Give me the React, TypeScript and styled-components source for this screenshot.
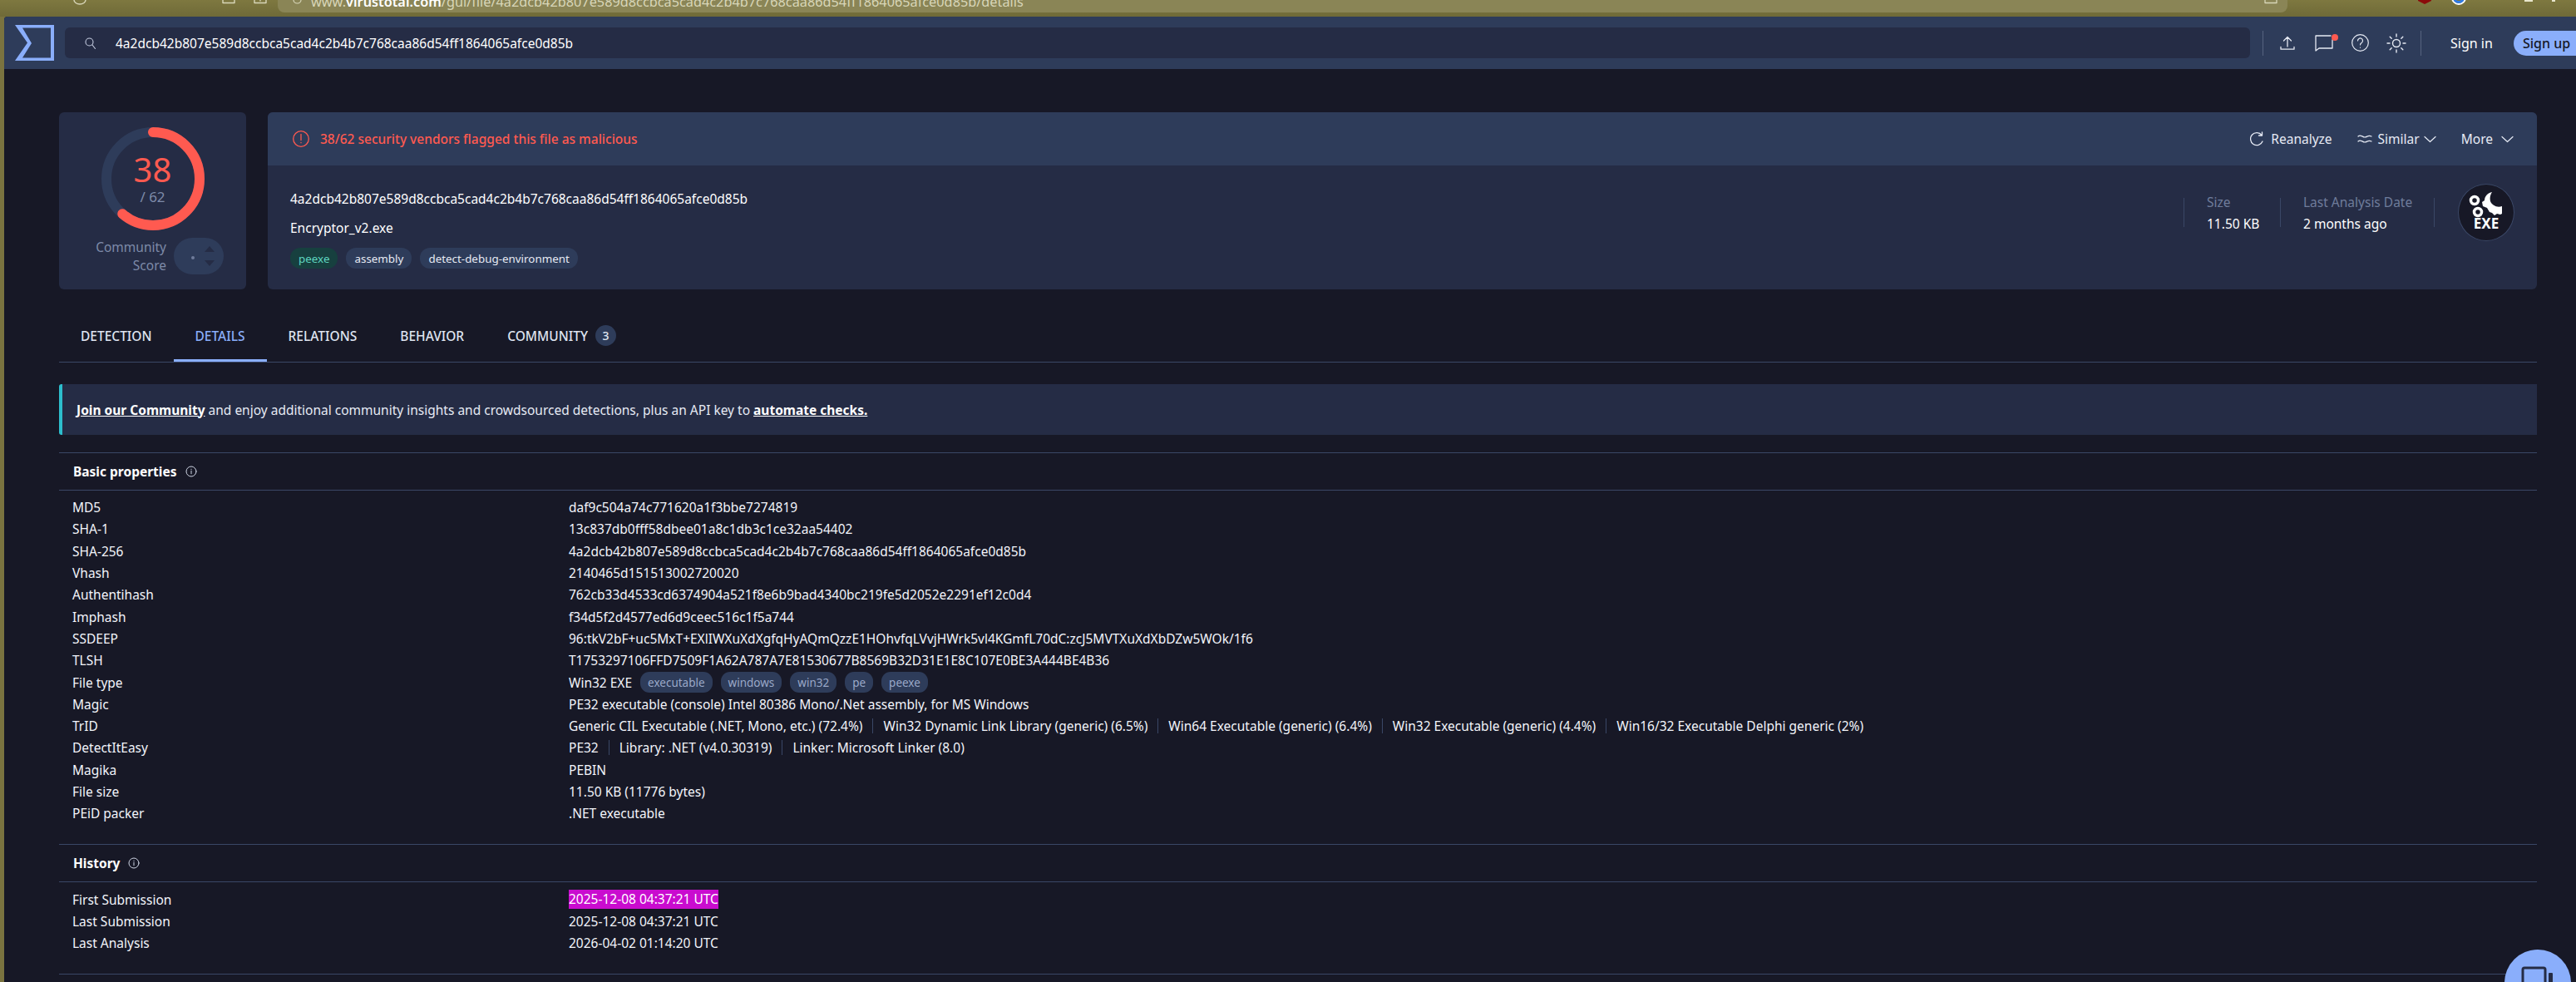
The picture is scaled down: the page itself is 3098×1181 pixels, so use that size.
import React from "react";
import styled, { createGlobalStyle } from "styled-components";

const GlobalStyle = createGlobalStyle`
  html, body {
    margin: 0;
    padding: 0;
    background: #7a7340;
    font-family: "Noto Sans", "Open Sans", sans-serif;
  }
`;

const Screen = styled.div`
  width: 3098px;
  height: 1181px;
  overflow: hidden;
  position: relative;
  background: #7a7340;
  color: #fff;
`;

const BrowserBar = styled.div`
  height: 20px;
  display: flex;
  align-items: flex-start;
  overflow: hidden;
  background: linear-gradient(#7e7840, #6f6a38);
`;

const ChromeIcon = styled.svg<{ $left: number }>`
  flex: none;
  margin-left: ${(p) => p.$left}px;
`;

const UrlBar = styled.div`
  margin-left: 13px;
  width: 2417px;
  height: 15px;
  flex: none;
  border-radius: 0 0 8px 8px;
  background: #8a8556;
  overflow: hidden;
  display: flex;
  align-items: flex-start;
  padding-left: 18px;
  box-sizing: border-box;
  position: relative;
  font-size: 16.3px;
  line-height: 22px;
  color: #d8d6b8;
  white-space: pre;
`;

const UrlHost = styled.span`
  color: #fff;
  font-weight: 600;
`;

const UrlText = styled.span`
  margin: -9px 0 0 11px;
`;

const UrlBookmark = styled.svg`
  position: absolute;
  right: 12px;
  top: 0;
`;

const Page = styled.div`
  margin-left: 5px;
  height: 1161px;
  background: #171826;
  border-radius: 4px 0 0 0;
  overflow: hidden;
`;

const TopBar = styled.header`
  height: 63px;
  background: #2e3c5a;
  display: flex;
  align-items: center;
`;

const Logo = styled.svg`
  width: 47px;
  height: 43px;
  margin-left: 13px;
  flex: none;
`;

const Search = styled.div`
  margin-left: 13px;
  width: 2628px;
  height: 37px;
  flex: none;
  background: #252c45;
  border-radius: 6px;
  display: flex;
  align-items: center;
  padding-left: 24px;
  box-sizing: border-box;
  gap: 24px;
  font-size: 15.5px;
  color: #fff;
`;

const VDivider = styled.span`
  width: 1px;
  height: 30px;
  background: #56637f;
  flex: none;
`;

const IconSlot = styled.div<{ $w: number; $left: number }>`
  width: ${(p) => p.$w}px;
  margin-left: ${(p) => p.$left}px;
  flex: none;
  display: flex;
  justify-content: center;
  position: relative;
`;

const RedDot = styled.span`
  position: absolute;
  top: -1px;
  right: -6px;
  width: 8px;
  height: 8px;
  border-radius: 50%;
  background: #ff5a50;
`;

const SignIn = styled.span`
  margin-left: 35px;
  width: 49px;
  font-size: 16px;
  white-space: nowrap;
  color: #fff;
  flex: none;
`;

const SignUp = styled.span`
  margin-left: 27px;
  width: 76px;
  height: 30px;
  flex: none;
  background: #8aaefb;
  color: #171826;
  font-size: 16px;
  font-weight: 500;
  border-radius: 15px 0 0 15px;
  display: flex;
  align-items: center;
  padding-left: 11px;
  box-sizing: border-box;
  white-space: nowrap;
`;

const Content = styled.main`
  padding: 52px 47px 0 66px;
`;

const Summary = styled.section`
  display: flex;
  gap: 26px;
  height: 213px;
`;

const ScoreCard = styled.div`
  width: 225px;
  flex: none;
  background: #252c45;
  border-radius: 6px;
  display: flex;
  flex-direction: column;
  align-items: center;
`;

const Ring = styled.div`
  width: 124px;
  height: 124px;
  margin-top: 18px;
  position: relative;
  flex: none;
`;

const RingText = styled.div`
  position: absolute;
  inset: 0;
  display: flex;
  flex-direction: column;
  align-items: center;
`;

const ScoreNumber = styled.div`
  margin-top: 28px;
  font-size: 40px;
  line-height: 46px;
  color: #ff5a50;
`;

const ScoreTotal = styled.div`
  margin-top: -1px;
  font-size: 17px;
  line-height: 22px;
  color: #7d8aa8;
`;

const CommunityRow = styled.div`
  margin-top: 9px;
  align-self: flex-end;
  margin-right: 27px;
  display: flex;
  align-items: center;
  gap: 9px;
`;

const CommunityLabel = styled.div`
  text-align: right;
  font-size: 15.5px;
  line-height: 22px;
  color: #7d8aa8;
`;

const Toggle = styled.div`
  width: 60px;
  height: 44px;
  border-radius: 22px;
  background: #2e3c5a;
`;

const DetailCard = styled.div`
  flex: 1;
  background: #252c45;
  border-radius: 6px;
  overflow: hidden;
`;

const AlertBar = styled.div`
  height: 64px;
  background: #2e3c5a;
  display: flex;
  align-items: center;
  padding: 0 28px 0 30px;
`;

const AlertText = styled.span`
  margin-left: 13px;
  font-size: 15.5px;
  font-weight: 500;
  color: #ff5a50;
`;

const Spacer = styled.div`
  flex: 1;
`;

const Action = styled.span<{ $left?: number; $gap?: number }>`
  margin-left: ${(p) => p.$left ?? 0}px;
  display: flex;
  align-items: center;
  gap: ${(p) => p.$gap ?? 5}px;
  font-size: 15.5px;
  color: #e6eaf4;
`;

const FileBody = styled.div`
  display: flex;
  height: 149px;
`;

const FileInfo = styled.div`
  flex: 1;
  padding: 29px 0 0 27px;
`;

const FileLine = styled.div`
  font-size: 15.5px;
  line-height: 22px;
  margin-bottom: 13px;
  color: #fff;
`;

const TagRow = styled.div`
  display: flex;
  gap: 10px;
`;

const Tag = styled.span<{ $green?: boolean }>`
  height: 25px;
  padding: 0 10px;
  border-radius: 12px;
  display: flex;
  align-items: center;
  font-size: 13.4px;
  background: ${(p) => (p.$green ? "#17403f" : "#2e3c5a")};
  color: ${(p) => (p.$green ? "#5ed6c0" : "#e6eaf4")};
`;

const Stats = styled.div`
  display: flex;
  align-items: flex-start;
  padding: 39px 27px 0 0;
`;

const Stat = styled.div<{ $width: number }>`
  width: ${(p) => p.$width}px;
  height: 35px;
  box-sizing: border-box;
  border-left: 1px solid #3a4766;
  padding-left: 27px;
`;

const StatLabel = styled.div`
  font-size: 15.5px;
  line-height: 20px;
  margin-top: -5px;
  color: #6f7c9b;
  white-space: nowrap;
`;

const StatValue = styled.div`
  font-size: 15.5px;
  line-height: 22px;
  margin-top: 5px;
  color: #fff;
  white-space: nowrap;
`;

const StatEnd = styled.span`
  width: 1px;
  height: 35px;
  background: #3a4766;
`;

const ExeBadge = styled.div`
  width: 68px;
  height: 69px;
  margin: -17px 0 0 28px;
  border-radius: 50%;
  background: #171826;
  border: 1px solid #3a4766;
  box-sizing: border-box;
  display: flex;
  flex-direction: column;
  align-items: center;
  position: relative;
`;

const ExeText = styled.span`
  position: absolute;
  bottom: 10px;
  font-size: 17px;
  line-height: 20px;
  font-weight: 700;
  color: #fff;
`;

const Tabs = styled.nav`
  margin-top: 33px;
  height: 54px;
  border-bottom: 1px solid #3a4766;
  display: flex;
  box-sizing: content-box;
`;

const TabItem = styled.div<{ $active?: boolean }>`
  padding: 0 26px;
  height: 54px;
  box-sizing: border-box;
  border-bottom: ${(p) => (p.$active ? "3px solid #8aaefb" : "none")};
  margin-bottom: -1px;
  display: flex;
  align-items: center;
  gap: 9px;
  font-size: 15.5px;
  font-weight: 500;
  color: ${(p) => (p.$active ? "#8aaefb" : "#dfe4f0")};
  padding-bottom: ${(p) => (p.$active ? "6px" : "9px")};
`;

const TabCount = styled.span`
  width: 25px;
  height: 25px;
  border-radius: 50%;
  background: #2e3c5a;
  display: flex;
  align-items: center;
  justify-content: center;
  font-size: 14px;
`;

const Banner = styled.div`
  margin-top: 26px;
  height: 61px;
  background: #252c45;
  border-left: 4px solid #2dbecd;
  border-radius: 3px 0 0 3px;
  display: flex;
  align-items: center;
  padding-left: 17px;
  font-size: 15.5px;
  color: #e6eaf4;
  white-space: pre;
`;

const BannerLink = styled.span`
  font-weight: 700;
  color: #fff;
  text-decoration: underline;
`;

const Section = styled.section<{ $top: number; $bottom: number }>`
  margin-top: ${(p) => p.$top}px;
  border-top: 1px solid #3a4766;
  padding-bottom: ${(p) => p.$bottom}px;
`;

const SectionTitle = styled.div`
  height: 44px;
  box-sizing: content-box;
  border-bottom: 1px solid #3a4766;
  display: flex;
  align-items: center;
  gap: 10px;
  padding-left: 17px;
  font-size: 15.5px;
  font-weight: 700;
  color: #fff;
`;

const Rows = styled.div`
  padding-top: 7px;
`;

const Row = styled.div`
  height: 26.3px;
  display: grid;
  grid-template-columns: 613px 1fr;
  align-items: center;
  font-size: 15.5px;
  color: #f2f4fa;
`;

const RowLabel = styled.span`
  padding-left: 16px;
`;

const RowValue = styled.span`
  display: flex;
  align-items: center;
  white-space: pre;
`;

const Highlight = styled.span`
  background: #c90ccf;
  color: #fff;
  line-height: 23px;
`;

const Pill = styled.span`
  height: 25px;
  padding: 0 9px;
  margin-left: 10px;
  border-radius: 11px;
  background: #2e3c5a;
  color: #9aa8c8;
  font-size: 13.5px;
  display: flex;
  align-items: center;
`;

const Sep = styled.span`
  width: 1px;
  height: 18px;
  margin: 0 12px;
  background: #3a4766;
`;

const Fab = styled.div`
  position: absolute;
  left: 3012px;
  top: 1142px;
  width: 80px;
  height: 80px;
  border-radius: 50%;
  background: #8aaefb;
`;

const FabIcon = styled.svg`
  position: absolute;
  left: 20px;
  top: 20px;
`;

const stroke = { fill: "none", stroke: "currentColor", strokeLinecap: "round", strokeLinejoin: "round" } as const;

const InfoIcon = () => (
  <svg width="14" height="14" viewBox="0 0 14 14" {...stroke} color="#cfd5e4" strokeWidth="1">
    <circle cx="7" cy="7" r="6" />
    <path d="M7 6.2v3.6M7 4.2v.3" />
  </svg>
);

const Chevron = () => (
  <svg width="15" height="9" viewBox="0 0 15 9" {...stroke} color="#e6eaf4" strokeWidth="1.2">
    <path d="M1 1.5l6.5 6 6.5-6" />
  </svg>
);

const rows: [string, React.ReactNode][] = [
  ["MD5", "daf9c504a74c771620a1f3bbe7274819"],
  ["SHA-1", "13c837db0fff58dbee01a8c1db3c1ce32aa54402"],
  ["SHA-256", "4a2dcb42b807e589d8ccbca5cad4c2b4b7c768caa86d54ff1864065afce0d85b"],
  ["Vhash", "2140465d151513002720020"],
  ["Authentihash", "762cb33d4533cd6374904a521f8e6b9bad4340bc219fe5d2052e2291ef12c0d4"],
  ["Imphash", "f34d5f2d4577ed6d9ceec516c1f5a744"],
  ["SSDEEP", "96:tkV2bF+uc5MxT+EXlIWXuXdXgfqHyAQmQzzE1HOhvfqLVvjHWrk5vl4KGmfL70dC:zcJ5MVTXuXdXbDZw5WOk/1f6"],
  ["TLSH", "T1753297106FFD7509F1A62A787A7E81530677B8569B32D31E1E8C107E0BE3A444BE4B36"],
  [
    "File type",
    <>
      Win32 EXE
      <Pill>executable</Pill>
      <Pill>windows</Pill>
      <Pill>win32</Pill>
      <Pill>pe</Pill>
      <Pill>peexe</Pill>
    </>,
  ],
  ["Magic", "PE32 executable (console) Intel 80386 Mono/.Net assembly, for MS Windows"],
  [
    "TrID",
    <>
      Generic CIL Executable (.NET, Mono, etc.) (72.4%)
      <Sep />
      Win32 Dynamic Link Library (generic) (6.5%)
      <Sep />
      Win64 Executable (generic) (6.4%)
      <Sep />
      Win32 Executable (generic) (4.4%)
      <Sep />
      Win16/32 Executable Delphi generic (2%)
    </>,
  ],
  [
    "DetectItEasy",
    <>
      PE32
      <Sep />
      Library: .NET (v4.0.30319)
      <Sep />
      Linker: Microsoft Linker (8.0)
    </>,
  ],
  ["Magika", "PEBIN"],
  ["File size", "11.50 KB (11776 bytes)"],
  ["PEiD packer", ".NET executable"],
];

const App: React.FC = () => {
  return (
    <Screen>
      <GlobalStyle />
      <BrowserBar>
        <ChromeIcon $left={88} width="16" height="6" viewBox="0 0 16 6" {...stroke} color="#d8d6b8" strokeWidth="1.4">
          <path d="M1 0a7 5 0 0 0 14 0" />
        </ChromeIcon>
        <ChromeIcon $left={163} width="16" height="5" viewBox="0 0 16 5" {...stroke} color="#d8d6b8" strokeWidth="1.4">
          <path d="M1 0v3.500h14V0" />
        </ChromeIcon>
        <ChromeIcon $left={22} width="16" height="5" viewBox="0 0 16 5" {...stroke} color="#d8d6b8" strokeWidth="1.4">
          <path d="M1 0v3.500h14V0M8 0v1" />
        </ChromeIcon>
        <UrlBar>
          <svg width="11" height="5" viewBox="0 0 11 5" {...stroke} color="#d8d6b8" strokeWidth="1.2" style={{ flex: "none" }}>
            <path d="M1 0a4.500 4 0 0 0 9 0" />
          </svg>
          <UrlText>
            www.<UrlHost>virustotal.com</UrlHost>/gui/file/4a2dcb42b807e589d8ccbca5cad4c2b4b7c768caa86d54ff1864065afce0d85b/details
          </UrlText>
          <UrlBookmark width="16" height="5" viewBox="0 0 16 5" {...stroke} color="#d8d6b8" strokeWidth="1.3">
            <path d="M1 0v3.500h14V0" />
          </UrlBookmark>
        </UrlBar>
        <ChromeIcon $left={157} width="16" height="5" viewBox="0 0 16 5">
          <path d="M0 0h16v1l-8 4-8-4z" fill="#8b0a0a" />
        </ChromeIcon>
        <ChromeIcon $left={24} width="18" height="6" viewBox="0 0 18 6" fill="none">
          <circle cx="9" cy="-3" r="8" stroke="#fff" strokeWidth="2" />
          <circle cx="9" cy="-3" r="5.500" stroke="#2f7be8" strokeWidth="3" />
        </ChromeIcon>
        <ChromeIcon $left={70} width="10" height="2" viewBox="0 0 10 2">
          <rect width="10" height="2" fill="#e8e6cc" />
        </ChromeIcon>
        <ChromeIcon $left={23} width="4" height="2" viewBox="0 0 4 2">
          <rect width="4" height="2" fill="#e8e6cc" />
        </ChromeIcon>
      </BrowserBar>
      <Page>
        <TopBar>
          <Logo viewBox="0 0 47 43">
            <path d="M0 0h47v43H0l15-21.5z" fill="#8aaefb" />
            <path d="M9 3.500h34v36H9l11-17.500z" fill="#2e3c5a" />
          </Logo>
          <Search>
            <svg width="13" height="14" viewBox="0 0 13 14" {...stroke} color="#c5cce0" strokeWidth="1.1">
              <circle cx="5.500" cy="5.500" r="4.500" />
              <path d="M9 9l3.500 4.500" />
            </svg>
            4a2dcb42b807e589d8ccbca5cad4c2b4b7c768caa86d54ff1864065afce0d85b
          </Search>
          <IconSlot $w={1} $left={15}>
            <VDivider />
          </IconSlot>
          <IconSlot $w={18} $left={20}>
            <svg width="18" height="18" viewBox="0 0 18 18" {...stroke} color="#e6eaf4" strokeWidth="1.3">
              <path d="M9 13V1.500M4.500 6L9 1.500 13.500 6M1 13.500v2.700h16v-2.700" />
            </svg>
          </IconSlot>
          <IconSlot $w={22} $left={24}>
            <svg width="22" height="20" viewBox="0 0 22 20" {...stroke} color="#e6eaf4" strokeWidth="1.3">
              <path d="M19 1H1v18l4-3h16V6" />
            </svg>
            <RedDot />
          </IconSlot>
          <IconSlot $w={21} $left={22}>
            <svg width="21" height="21" viewBox="0 0 21 21" {...stroke} color="#e6eaf4" strokeWidth="1.2">
              <circle cx="10.500" cy="10.500" r="9.800" />
              <path d="M7.500 8a3 3 0 1 1 4.600 2.500c-1 .6-1.600 1.200-1.600 2.500M10.500 16v.2" />
            </svg>
          </IconSlot>
          <IconSlot $w={24} $left={21}>
            <svg width="24" height="24" viewBox="0 0 24 24" {...stroke} color="#e6eaf4" strokeWidth="1.4">
              <circle cx="12" cy="12" r="4.500" />
              <path d="M12 1v3M12 20v3M1 12h3M20 12h3M4.200 4.200l2 2M17.800 17.800l2 2M4.200 19.800l2-2M17.800 6.200l2-2" />
            </svg>
          </IconSlot>
          <IconSlot $w={1} $left={17}>
            <VDivider />
          </IconSlot>
          <SignIn>Sign in</SignIn>
          <SignUp>Sign up</SignUp>
        </TopBar>
        <Content>
          <Summary>
            <ScoreCard>
              <Ring>
                <svg width="124" height="124" viewBox="0 0 124 124" fill="none">
                  <circle cx="62" cy="62" r="56" stroke="#2e3c5a" strokeWidth="12" />
                  <circle
                    cx="62"
                    cy="62"
                    r="56"
                    stroke="#ff5a50"
                    strokeWidth="12"
                    strokeLinecap="round"
                    strokeDasharray={`${(2 * Math.PI * 56 * 38) / 62} 1000`}
                    transform="rotate(-90 62 62)"
                  />
                </svg>
                <RingText>
                  <ScoreNumber>38</ScoreNumber>
                  <ScoreTotal>/ 62</ScoreTotal>
                </RingText>
              </Ring>
              <CommunityRow>
                <CommunityLabel>
                  Community
                  <br />
                  Score
                </CommunityLabel>
                <Toggle>
                  <svg width="60" height="44" viewBox="0 0 60 44">
                    <circle cx="23" cy="24" r="2" fill="#6f7c9b" />
                    <path d="M37 17l6-7 6 7zM37 27h12l-6 7z" fill="#252c45" />
                  </svg>
                </Toggle>
              </CommunityRow>
            </ScoreCard>
            <DetailCard>
              <AlertBar>
                <svg width="20" height="20" viewBox="0 0 20 20" {...stroke} color="#ff5a50" strokeWidth="1.3">
                  <circle cx="10" cy="10" r="9.300" />
                  <path d="M10 4.500v7M10 14.500v.2" />
                </svg>
                <AlertText>38/62 security vendors flagged this file as malicious</AlertText>
                <Spacer />
                <svg width="16" height="18" viewBox="0 0 16 18" {...stroke} color="#e6eaf4" strokeWidth="1.3">
                  <path d="M14 4.500A7.500 7.500 0 1 0 15 12M14.500 1v4h-4" />
                </svg>
                <Action $left={9}>Reanalyze</Action>
                <svg width="18" height="12" viewBox="0 0 18 12" {...stroke} color="#e6eaf4" strokeWidth="1.2" style={{ marginLeft: 30 }}>
                  <path d="M1 3c3-3 5 1 8 1s4-3 8-1M1 9c3-3 5 1 8 1s4-3 8-1" />
                </svg>
                <Action $left={7}>
                  Similar
                  <Chevron />
                </Action>
                <Action $left={30} $gap={10}>
                  More
                  <Chevron />
                </Action>
              </AlertBar>
              <FileBody>
                <FileInfo>
                  <FileLine>4a2dcb42b807e589d8ccbca5cad4c2b4b7c768caa86d54ff1864065afce0d85b</FileLine>
                  <FileLine>Encryptor_v2.exe</FileLine>
                  <TagRow>
                    <Tag $green>peexe</Tag>
                    <Tag>assembly</Tag>
                    <Tag>detect-debug-environment</Tag>
                  </TagRow>
                </FileInfo>
                <Stats>
                  <Stat $width={116}>
                    <StatLabel>Size</StatLabel>
                    <StatValue>11.50 KB</StatValue>
                  </Stat>
                  <Stat $width={185}>
                    <StatLabel>Last Analysis Date</StatLabel>
                    <StatValue>2 months ago</StatValue>
                  </Stat>
                  <StatEnd />
                  <ExeBadge>
                    <svg width="50" height="34" viewBox="0 0 50 34" fill="#fff" style={{ marginTop: 7 }}>
                      <circle cx="11" cy="12" r="4.500" fill="none" stroke="#fff" strokeWidth="3.500" />
                      <circle cx="15" cy="26" r="4.500" fill="none" stroke="#fff" strokeWidth="3.500" />
                      <path d="M32 2c-5 1-9 5-9 10l-3 2 1 5 5 2 3 5 3 1 3 3 3-2 4 1 2-1 0-9c-6 2-12-1-14-6-1-4 0-8 2-11z" />
                    </svg>
                    <ExeText>EXE</ExeText>
                  </ExeBadge>
                </Stats>
              </FileBody>
            </DetailCard>
          </Summary>
          <Tabs>
            <TabItem>DETECTION</TabItem>
            <TabItem $active>DETAILS</TabItem>
            <TabItem>RELATIONS</TabItem>
            <TabItem>BEHAVIOR</TabItem>
            <TabItem>
              COMMUNITY
              <TabCount>3</TabCount>
            </TabItem>
          </Tabs>
          <Banner>
            <BannerLink>Join our Community</BannerLink>
            {" and enjoy additional community insights and crowdsourced detections, plus an API key to "}
            <BannerLink>automate checks.</BannerLink>
          </Banner>
          <Section $top={21} $bottom={24}>
            <SectionTitle>
              Basic properties
              <InfoIcon />
            </SectionTitle>
            <Rows>
              {rows.map(([label, value]) => (
                <Row key={label}>
                  <RowLabel>{label}</RowLabel>
                  <RowValue>{value}</RowValue>
                </Row>
              ))}
            </Rows>
          </Section>
          <Section $top={0} $bottom={24}>
            <SectionTitle>
              History
              <InfoIcon />
            </SectionTitle>
            <Rows>
              <Row>
                <RowLabel>First Submission</RowLabel>
                <RowValue>
                  <Highlight>2025-12-08 04:37:21 UTC</Highlight>
                </RowValue>
              </Row>
              <Row>
                <RowLabel>Last Submission</RowLabel>
                <RowValue>2025-12-08 04:37:21 UTC</RowValue>
              </Row>
              <Row>
                <RowLabel>Last Analysis</RowLabel>
                <RowValue>2026-04-02 01:14:20 UTC</RowValue>
              </Row>
            </Rows>
          </Section>
          <Section $top={0} $bottom={0} />
        </Content>
      </Page>
      <Fab>
        <FabIcon width="40" height="24" viewBox="0 0 40 24" color="#252c45">
          <rect x="2" y="2" width="27" height="24" rx="2" fill="none" stroke="currentColor" strokeWidth="3" />
          <rect x="33" y="8" width="5" height="16" rx="1" fill="currentColor" />
        </FabIcon>
      </Fab>
    </Screen>
  );
};

export default App;
